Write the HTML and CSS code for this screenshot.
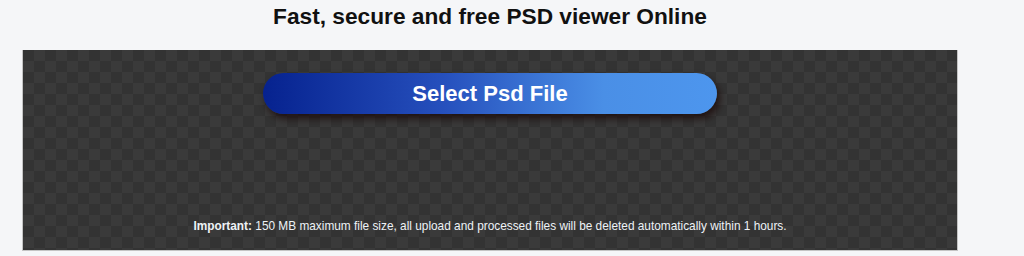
FILE: index.html
```html
<!DOCTYPE html>
<html lang="en">
<head>
    <meta charset="UTF-8">
    <meta name="viewport" content="width=device-width, initial-scale=1.0">
    <title>PSD Viewer Online</title>
    <link rel="stylesheet" href="styles.css">
</head>
<body>

<div class="page">
    <h1 class="page-title">Fast, secure and free PSD viewer Online</h1>

    <div class="viewer">
        <button class="select-button" type="button">Select Psd File</button>
        <p class="note"><strong>Important:</strong> 150 MB maximum file size, all upload and processed files will be deleted automatically within 1 hours.</p>
    </div>
</div>

</body>
</html>
```

FILE: styles.css
```css
body {
    font-family: "Liberation Sans", Arial, sans-serif;
    background-color: #f5f6f8;
    margin: 0;
    padding: 0;
    color: #111;
}

.page {
    width: 936px;
    margin-left: 22px;
}

.page-title {
    margin: 0 0 21px;
    padding-top: 4px;
    font-size: 22.7px;
    line-height: 25px;
    text-align: center;
    color: #111;
}

.viewer {
    height: 201px;
    box-sizing: border-box;
    display: flex;
    flex-direction: column;
    align-items: center;
    padding: 23px 0 17px;
    border: 1px solid #c4c4c4;
    border-top: none;
    background-color: #333;
    background-image:
        linear-gradient(45deg, #3a3a3a 25%, transparent 25%, transparent 75%, #3a3a3a 75%),
        linear-gradient(45deg, #3a3a3a 25%, transparent 25%, transparent 75%, #3a3a3a 75%);
    background-size: 22px 22px;
    background-position: 0 0, 11px 11px;
}

.select-button {
    width: 454px;
    height: 41px;
    flex-shrink: 0;
    border: none;
    border-radius: 21px;
    background: linear-gradient(90deg, #06228f 0%, #2650bd 40%, #4a8fe6 75%, #4d96ee 100%);
    box-shadow: 3px 5px 7px rgba(25, 8, 8, 0.75);
    color: white;
    font-family: "Liberation Sans", Arial, sans-serif;
    font-size: 22px;
    font-weight: bold;
    cursor: pointer;
}

.note {
    margin: auto 0 0;
    font-size: 11.85px;
    line-height: 14px;
    color: #eef2f6;
}
```
